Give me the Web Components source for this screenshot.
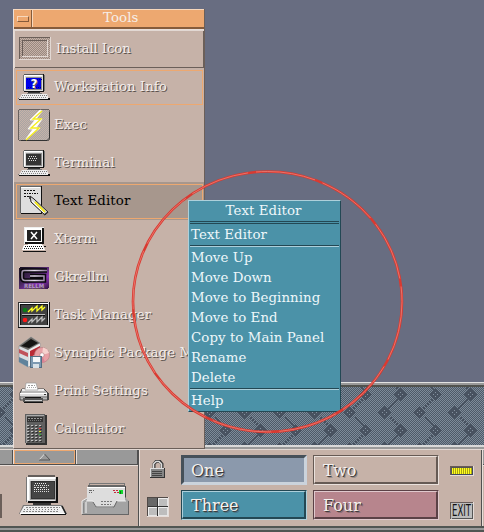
<!DOCTYPE html>
<html lang="en"><head><meta charset="utf-8"><title>Desktop</title>
<style>html,body{margin:0;height:532px;overflow:hidden;background:#686d81}</style></head>
<body><cde-desktop></cde-desktop>
<script>
const define=(name,html)=>customElements.define(name,class extends HTMLElement{
  connectedCallback(){
    if(this.shadowRoot)return;
    const root=this.attachShadow({mode:'open'});
    const t=document.createElement('template');
    t.innerHTML=typeof html==='function'?html(this):html;
    root.append(t.content.cloneNode(true));
  }
});
const r=(x,y,w,h,f)=>`<rect x="${x}" y="${y}" width="${w}" height="${h}" fill="${f}"/>`;
const dash=(x1,x2,y,c,d='1 1')=>`<path d="M${x1} ${y+.5}H${x2}" stroke="${c}" stroke-dasharray="${d}" fill="none"/>`;
const computer=(screen,extra)=>
  r(6,3,20,18,'#111')+r(5,4,22,16,'#777')+r(6,3,19,1,'#555')+r(6,4,19,16,'#dedede')+r(6,4,18,1,'#fff')+r(6,4,1,15,'#fff')+r(25,4,1,17,'#111')+r(8,6,16,13,'#8b8b8b')+r(8,7,15,11,screen)+extra+
  r(10,21,12,1,'#333')+r(9,22,15,1,'#777')+
  '<path d="M4 23H29L31 28H1Z" fill="#eee"/>'+dash(4,29,24,'#777')+dash(3,29,26,'#888')+r(1,28,31,1,'#111')+r(30,27,2,1,'#111')+r(0,27,1,1,'#777');
const mini=(x,y,c)=>`<path d="M${x} ${y+6}l4-4v3l5-5v5l5-5v4l3-3" stroke="${c}" stroke-width="1.3" fill="none"/>`;
const icons={
 install:[33,28,`<defs><pattern id="p" width="2" height="2" patternUnits="userSpaceOnUse"><rect width="2" height="2" fill="#c6b2a8"/><rect width="1" height="1" fill="#998980"/><rect x="1" y="1" width="1" height="1" fill="#998980"/></pattern></defs>`+
  r(1,4,32,23,'#e2d8d3')+r(1,4,31,22,'#6b5f59')+r(2,5,30,21,'url(#p)')+r(4,7,26,17,'#e2d8d3')+r(4,7,25,16,'#6b5f59')+r(5,8,24,15,'url(#p)')],
 info:[32,32,computer('#0000e8',dash(9,24,8,'#000080')+dash(10,24,16,'#000080')+'<text x="12.500" y="17" font-family="DejaVu Sans" font-weight="bold" font-size="12" fill="#fff">?</text>')],
 exec:[32,32,`<defs><pattern id="e" width="2" height="2" patternUnits="userSpaceOnUse"><rect width="2" height="2" fill="#c6b2a8"/><rect width="1" height="1" fill="#a9a5a4"/><rect x="1" y="1" width="1" height="1" fill="#a9a5a4"/></pattern></defs>
  <rect x=".5" y=".5" width="31" height="31" rx="2" fill="url(#e)" stroke="#69625f"/><path d="M3 31.5H29L31.5 29V3" stroke="#333" fill="none"/>
  <path d="M22 1 12 11H17L10 20H15L8 30 22 19H18L24 10H18L24 2Z" fill="#fff" stroke="#fff" stroke-width=".8"/><path d="M24 2 15 10H23L13 19H21L8 31" stroke="#f5ed20" fill="none" stroke-width="1.4"/>`],
 terminal:[32,32,computer('#343434',dash(11,19,9,'#ddd')+dash(10,20,11,'#ddd')+dash(11,18,13,'#ddd'))],
 editor:[32,32,r(2,1,22,27,'#666')+r(3,2,20,26,'#dedede')+r(3,2,19,1,'#fff')+r(23,1,1,28,'#111')+r(3,28,21,1,'#111')+dash(6,18,5,'#111','2 1')+dash(6,20,8,'#111','2 1 1 1')+dash(6,13,11,'#111','2 1')+
  '<path d="M12 11 16 14 30 27 27 30 13 17Z" fill="#d8d8d8" stroke="#222"/><path d="M17 17 27 27" stroke="#f4e91e" stroke-width="2"/><path d="M14 16 26 28" stroke="#fff"/><path d="M26 30 30 27M12 11V14" stroke="#333" stroke-width="1.5"/>'],
 xterm:[32,32,r(6,4,20,17,'#eee')+r(7,5,19,16,'#111')+r(7,5,17,14,'#fff')+r(9,7,14,11,'#222')+'<path d="M13 9 19 16M19 9 13 16" stroke="#fff" stroke-width="1.5"/>'+r(12,20,11,1,'#111')+'<path d="M6 22H25L27 27H4Z" fill="#fff"/>'+dash(7,25,23,'#111')+dash(6,25,25,'#222')+r(5,28,23,1,'#111')+r(26,23,2,1,'#111')+r(10,21,14,1,'#fff')],
 gkrellm:[32,32,`<defs><linearGradient id="g" x1="0" y1="0" x2="1" y2="1"><stop stop-color="#15101d"/><stop offset=".4" stop-color="#442658"/><stop offset=".7" stop-color="#8b35b4"/><stop offset="1" stop-color="#30123e"/></linearGradient><linearGradient id="h" x1="0" x2="1"><stop stop-color="#9a8ba6"/><stop offset=".5" stop-color="#e4dcec"/><stop offset="1" stop-color="#8c7599"/></linearGradient></defs>
  <rect x="1" y="6" width="30" height="22" rx="2" fill="url(#g)"/><path d="M29 9.500H6Q4 9.500 4 12V16Q4 19.500 7 19.500H26V15H12" fill="none" stroke="#09070b" stroke-width="4.500"/><path d="M29 9.500H6Q4 9.500 4 12V16Q4 19.500 7 19.500H26V15H12" fill="none" stroke="url(#h)" stroke-width="1.500"/><text x="6" y="27" font-family="DejaVu Sans" font-weight="bold" font-size="6" textLength="20" lengthAdjust="spacingAndGlyphs" fill="#b294c8">RELLM</text>`],
 task:[32,32,r(0,3,32,26,'#111')+r(0,3,31,25,'#ddd')+r(0,3,30,1,'#333')+r(0,3,1,25,'#333')+r(1,4,29,1,'#fff')+r(2,5,28,21,'#111')+r(3,6,26,20,'#414141')+r(4,15,23,1,'#bbb')+r(4,16,23,1,'#111')+'<circle cx="7" cy="11" r="2.300" fill="#087d16"/><circle cx="7" cy="21" r="2.300" fill="#ff1717"/>'+mini(10,7,'#ffff20')+mini(10,18,'#bbb')],
 synaptic:[32,32,`<path d="M1 9 13 0 22 6V26L10 30 1 25Z" fill="#d8dde0" stroke="#89929b" stroke-width=".6"/><path d="M1 9 13 0 22 6 10 13Z" fill="#6b6a66"/><path d="M3 9 13 2 20 6 11 11Z" fill="#151514"/><path d="M11 13 22 7V25L11 29Z" fill="#eee"/><path d="M12 14 22 9V16L12 20Z" fill="#b92935"/><path d="M1 12 10 16V20L1 16Z" fill="#c0525a"/><path d="M1 20 10 24V30L1 25Z" fill="#60829b"/>
  <circle cx="24" cy="18" r="7.500" fill="#e8a0a5" stroke="#b98287" stroke-width=".7"/><path d="M24 18 25 10.500A8 8 0 0 1 31 16Z" fill="#f6d2ce"/><path d="M24 18 18 23A8 8 0 0 0 27 25Z" fill="#d78494"/><circle cx="24" cy="18" r="2.200" fill="#fff" stroke="#ad7777" stroke-width=".6"/>
  <rect x="12.500" y="19.500" width="11" height="11" rx="1" fill="#7c99b1" stroke="#546d82"/><rect x="15" y="20" width="7" height="5" fill="#f5f8fa"/><rect x="15" y="27" width="6" height="4" fill="#d8e1e7"/>`],
 printer:[32,32,'<path d="M4 14H26L30 18V25H2V18Z" fill="#b8b8b8" stroke="#444"/>'+r(4,14,22,2,'#eee')+'<path d="M7 15 8 8H18L20 15Z" fill="#fff" stroke="#999" stroke-width=".7"/>'+dash(10,17,10,'#999','2 1')+dash(9,18,12,'#aaa','1 1')+r(2,18,28,3,'#ddd')+r(2,18,27,1,'#fff')+r(3,21,26,2,'#999')+r(5,23,20,4,'#555')+r(7,22,16,1,'#111')+r(7,25,17,1,'#ccc')+r(6,27,19,1,'#111')+r(26,19,2,1,'#333')+r(29,18,2,7,'#444')],
 calculator:[32,32,r(8,2,21,30,'#333')+r(7,1,20,29,'#606060')+r(8,2,1,28,'#999')+r(9,2,17,1,'#aaa')+r(9,4,16,5,'#333')+dash(10,24,5,'#999','2 1')+dash(10,24,7,'#777','1 1')+[12,15,18,21,24,27].map(y=>[9,13,17,21].map(x=>r(x+1,y+1,2,1,'#333')+r(x,y,2,1,x===21&&y===15?'#ee3434':x===21&&y===18?'#eeee20':x===21&&y===21?'#30c040':'#c2c2c2')).join('')).join('')],
 bigterm:[48,42,r(9,0,27,2,'#655e5b')+r(7,2,32,25,'#777')+r(8,2,29,25,'#e0e0e0')+r(8,2,28,2,'#fff')+r(8,3,2,22,'#fff')+r(37,2,2,26,'#111')+r(36,4,1,22,'#aaa')+r(11,6,25,19,'#999')+r(12,6,24,18,'#333')+r(13,7,22,16,'#444')+dash(16,28,8,'#eee')+dash(15,30,10,'#ddd')+dash(15,28,12,'#ddd','2 1')+dash(15,30,14,'#eee')+dash(15,31,16,'#ddd')+r(9,26,28,2,'#111')+r(14,28,18,2,'#333')+r(17,30,13,1,'#666')+
  '<path d="M4 30H43L48 39H0Z" fill="#777"/><path d="M5 31H42L46 38H1Z" fill="#eee"/>'+dash(7,41,32,'#888','2 1')+dash(5,41,34,'#777','1 2')+dash(4,40,36,'#888','2 1')+r(1,38,46,1,'#fff')+r(2,39,45,1,'#111')+'<path d="M43 31 47 39" stroke="#222" stroke-width="1.500"/>'],
 mail:[49,34,r(7,0,36,4,'#777')+r(8,1,34,2,'#c6b2a8')+r(6,2,37,3,'#666')+r(5,4,38,25,'#ddd')+r(5,4,38,1,'#fff')+r(43,3,1,14,'#444')+'<path d="M0 18 5 15V18H11L15 24H30L34 18H43V14L47 18V31H0Z" fill="#a3a3a3"/><path d="M0 31V18L5 15M4 18H11L14 24H31L34 18H44" stroke="#eee" fill="none"/><path d="M11 19 14 24H32L35 18" stroke="#666" fill="none"/>'+r(0,31,47,1,'#666')+r(46,18,1,14,'#666')+r(3,19,2,11,'#ccc')+r(1,20,1,10,'#888')+dash(7,12,7,'#666','3 1')+dash(7,10,9,'#666')+dash(19,30,18,'#777','2 1')+dash(19,29,21,'#777','2 1')+dash(31,37,7,'#c62c3b','2 1')+dash(32,37,9,'#c62c3b','2 1')+r(37,7,4,4,'#11d92b')+r(38,8,1,3,'#087d16')],
 lock:[16,19,'<path d="M4 8V4L6 1.500H10L12 4V8" stroke="#333" stroke-width="3" fill="none"/><path d="M3.500 8V4L6 1.500H9L11.500 4V8" stroke="#ddd" stroke-width="1.500" fill="none"/>'+r(0,8,15,10,'#333')+r(0,8,14,9,'#ddd')+r(1,9,13,8,'#858585')+r(2,11,10,1,'#444')+r(2,13,10,1,'#444')+r(2,15,10,1,'#444')],
 grid:[22,20,r(0,0,22,20,'#e6ddd9')+r(0,0,21,19,'#514a47')+r(1,1,20,18,'#e4e4e4')+[[1,1],[11,1],[1,10],[11,10]].map(([x,y],i)=>r(x,y,9,8,'#444')+r(x+(i?1:0),y+(i?1:0),i?8:9,i?7:8,i?'#bdbdbd':'#686868')+(i?r(x,y,9,1,'#eee')+r(x,y,1,8,'#eee'):'')).join('')+r(10,1,1,18,'#333')+r(1,9,20,1,'#333')],
 load:[24,10,r(0,0,24,10,'#e6ddd9')+r(0,0,23,9,'#675b58')+r(1,1,22,8,'#555')+r(2,2,20,6,'#aaa413')+Array.from({length:10},(_,i)=>r(2+i*2,2,1,6,'#ffff20')).join('')+r(22,2,1,7,'#404860')+r(2,8,21,1,'#404860')],
 exit:[24,18,r(0,0,24,18,'#e6ddd9')+r(0,0,23,1,'#675b58')+r(0,0,1,17,'#675b58')+r(1,1,22,16,'#bdbdbd')+r(22,2,1,15,'#555')+r(2,16,21,1,'#555')+'<text x="2" y="14" font-family="DejaVu Sans" font-size="15" textLength="19" lengthAdjust="spacingAndGlyphs" fill="#111">EXIT</text>']
};
define('cde-icon',el=>{const [w,h,s]=icons[el.getAttribute('name')];return `<style>:host{display:block;width:${w}px;height:${h}px;flex:none}svg{display:block;overflow:visible;shape-rendering:crispEdges}path,circle,text{shape-rendering:auto}</style><svg width="${w}" height="${h}" viewBox="0 0 ${w} ${h}">${s}</svg>`});

define('cde-item',`<style>
:host{display:flex;box-sizing:border-box;width:190px;height:38px;padding:3px 0 3px 4px;align-items:flex-start;gap:4px;white-space:nowrap;color:#f2edeb;text-shadow:1px 1px 0 #5b514c;position:relative;letter-spacing:.12px}
span{line-height:32px}
:host([framed])::before{content:"";position:absolute;inset:2px 1px 1px 2px;border:1px solid #eda870}
:host([tight]){letter-spacing:0}
:host([active]){background:#a7978d;color:#000;text-shadow:none}
:host([first]){box-shadow:inset 1px 1px #e2d8d3,inset -1px -1px #6b5f59;gap:5px;letter-spacing:-.12px}
</style><slot name="icon"></slot><span><slot></slot></span>`);

define('cde-title',`<style>
:host{display:flex;height:20px;background:#eda870;box-sizing:border-box;border-top:1px solid #f8d8bc;border-bottom:2px solid #855b3b;color:#f6eee8}
i{width:19px;border-right:1px solid #855b3b;box-sizing:border-box;display:grid;place-items:center;padding:1px 0 0 2px}
i:before{content:"";width:10px;height:4px;border:1px solid;border-color:#f8d8bc #855b3b #855b3b #f8d8bc}
b{font-weight:400;flex:1;border-left:1px solid #f8d8bc;text-align:center;line-height:16px;padding-left:6px;border-right:1px solid #855b3b;padding-right:0;text-indent:0;box-sizing:border-box;padding-right:1px;letter-spacing:.1px}
b{padding-left:0;text-align:left;padding-left:70px}
</style><i></i><b><slot></slot></b>`);

define('cde-subpanel',`<style>
:host{display:block;box-sizing:border-box;width:192px;height:440px;background:#c6b2a8;border-left:1px solid #e8ded9;border-right:1px solid #6b5f59;border-bottom:1px solid #6b5f59;overflow:hidden;font:13.33px/16px "DejaVu Serif",serif}
cde-title{margin-left:-1px;margin-right:-1px}
.list{border-top:1px solid #e8ded9}
</style><cde-title>Tools</cde-title><div class="list">
${[['install','Install Icon','first'],['info','Workstation Info','framed tight'],['exec','Exec',''],['terminal','Terminal',''],['editor','Text Editor','active framed'],['xterm','Xterm',''],['gkrellm','Gkrellm','tight'],['task','Task Manager',''],['synaptic','Synaptic Package M',''],['printer','Print Settings','tight'],['calculator','Calculator','tight']].map(a=>`<cde-item ${a[2]}><cde-icon slot="icon" name="${a[0]}"></cde-icon>${a[1]}</cde-item>`).join('')}</div>`);

define('cde-menu',`<style>
:host{display:block;box-sizing:border-box;width:153px;height:212px;background:#4b92a8;border:1px solid;border-color:#add0db #234854 #234854 #add0db;font:13.33px/20px "DejaVu Serif",serif;letter-spacing:.08px;color:#eef7fa}
h1{font:inherit;text-align:center;margin:0;height:20px;padding-right:2px}
div{padding-left:2px;height:20px}
hr{border:0;margin:0 1px 1px;height:1px;background:#234854;border-bottom:1px solid #add0db}
hr.double{height:1px;background:none;border-top:1px solid #234854;border-bottom:1px solid #234854}
</style><h1>Text Editor</h1><hr class="double"><div>Text Editor</div><hr><div>Move Up</div><div>Move Down</div><div>Move to Beginning</div><div>Move to End</div><div>Copy to Main Panel</div><div>Rename</div><div>Delete</div><hr><div>Help</div>`);

define('workspace-button',`<style>
:host{display:block;box-sizing:border-box;width:126px;height:30px;background:var(--c);border:1px solid;border-color:var(--d) var(--l) var(--l) var(--d);font:16px/27px "DejaVu Serif",serif;color:#f4f1ef;text-shadow:1px 1px #3d3a3a,2px 2px #3d3a3a55}
div{box-sizing:border-box;height:28px;padding-left:8px;border:1px solid;border-color:var(--l) var(--d) var(--d) var(--l);border-right-width:2px;border-bottom-width:2px}
:host([pressed]) div{border:2px solid;border-color:var(--d) var(--l) var(--l) var(--d);padding-left:7px;line-height:25px}
</style><div><slot></slot></div>`);

define('front-panel',`<style>
:host{display:grid;grid-template-columns:138px 343px 3px;box-sizing:border-box;width:484px;height:87px;padding-top:5px;background:linear-gradient(#d9d9d9 2px,#999 2px 4px,#e2d8d3 4px 5px,#c6b2a8 5px);position:relative}
section{height:76px}
.tabs{display:grid;grid-template-columns:13px 63px 62px;height:15px;background:#999;border-bottom:1px solid #505050;box-sizing:border-box;box-shadow:0 1px #e8ded9}
.tabs>*{box-sizing:border-box;border-right:1px solid #505050}
.tabs .last{border-left:1px solid #e8ded9}
.tab{border-left:1px solid #e8ded9}
.arrow{border:1px solid #eda870;display:grid;place-items:center;height:14px;box-sizing:border-box}
.apps{display:flex;gap:15px;align-items:flex-start;margin-top:10px}
.apps:before{content:"";width:2px;height:24px;margin:19px 2px 0 0;background:#6b5f59}
.mail{margin-top:8px}
.switch{border-left:1px solid #505050;display:grid;grid-template-columns:27px 126px 126px 24px;grid-template-rows:30px 30px;gap:5px 7px;padding:5px 0 0 7px;box-sizing:border-box;align-content:start;align-items:start;box-shadow:inset 1px 0 #e8ded9}
[name=lock]{margin:5px 0 0 4px}[name=grid]{margin:7px 0 0 1px}
workspace-button{margin-left:1px}.second{margin-left:0}
.switch{column-gap:7px}
[name=load]{margin:11px 0 0 4px}[name=exit]{margin:12px 0 0 4px}
.edge{border-left:1px solid #505050;background:linear-gradient(#999 14px,#505050 14px 15px,#e8ded9 15px 16px,#c6b2a8 16px);box-shadow:inset 1px 0 #e8ded9}
footer{grid-column:1/-1;height:6px;background:linear-gradient(#505552 2px,#999 2px 4px,#505552 4px)}
</style>
<section><div class="tabs"><i></i><div class="tab"><div class="arrow"><svg width="13" height="8"><path d="M1 7 6.500 1" stroke="#ddd" /><path d="M6.500 1 12 7H1" fill="none" stroke="#555"/></svg></div></div><i class="last"></i></div>
<div class="apps"><cde-icon name="bigterm"></cde-icon><cde-icon class="mail" name="mail"></cde-icon></div></section>
<section class="switch"><cde-icon name="lock"></cde-icon>
<workspace-button pressed style="--c:#8b99ac;--d:#465059;--l:#cbd3dc">One</workspace-button>
<workspace-button class="second" style="--c:#c6b2a8;--d:#665a54;--l:#eae1dc">Two</workspace-button><cde-icon name="load"></cde-icon>
<cde-icon name="grid"></cde-icon>
<workspace-button style="--c:#4b92a8;--d:#234854;--l:#add0db">Three</workspace-button>
<workspace-button class="second" style="--c:#b7858d;--d:#5b4146;--l:#e0c9cd">Four</workspace-button><cde-icon name="exit"></cde-icon></section><div class="edge"></div><footer></footer>`);

define('pattern-strip',()=>{
 const diamond=(cx,cy)=>{let s='';for(let y=-6;y<=6;y++){const w=6-Math.abs(y);s+=r(cx-w,cy+y,2*w+1,1,'#485260')}
  return s+[[-2,0],[2,0],[0,-2],[0,2]].map(p=>r(cx+p[0],cy+p[1],1,1,'#8592a0')).join('')};
 let line='';for(let i=5;i<15;i+=2){line+=r(29-i,7+i,2,2,'#485260')+r(13+i,25+i,2,2,'#485260')+r(13+i,25+i-36,2,2,'#485260')}
 return `<style>:host{display:block;height:63px;box-sizing:border-box;padding-top:5px;background:linear-gradient(#e2e2e2 1px,#999 1px 3px,#50524e 3px 5px,#667382 5px)}svg{display:block}</style>
<svg width="484" height="58" shape-rendering="crispEdges"><defs><pattern id="c" width="2" height="2" patternUnits="userSpaceOnUse">${r(0,0,2,2,'#7d8b99')+r(0,0,1,1,'#4e5a68')+r(1,1,1,1,'#4e5a68')}</pattern><pattern id="z" x="370" y="0" width="35" height="36" patternUnits="userSpaceOnUse">${line+diamond(28,7)+diamond(12,25)}</pattern></defs>${r(0,0,484,58,'url(#c)')}<g transform="translate(2 0)">${r(-2,0,484,58,'url(#z)')}</g></svg>`});

define('cde-desktop',`<style>
:host{display:flex;flex-direction:column;justify-content:flex-end;position:relative;width:484px;height:532px;overflow:hidden;background:#686d81}
cde-subpanel{position:absolute;left:13px;top:9px}
cde-menu{position:absolute;left:188px;top:200px}
.ring{position:absolute;left:0;top:0}
</style><pattern-strip></pattern-strip><front-panel></front-panel><cde-subpanel></cde-subpanel><cde-menu></cde-menu>
<svg class="ring" width="484" height="532" fill="none"><ellipse cx="267.500" cy="301.700" rx="134.500" ry="130.200" stroke="#d93a31" stroke-width="2.600"/><ellipse cx="267.500" cy="301.700" rx="134.500" ry="130.200" stroke="#ec8277" stroke-width=".8" stroke-dasharray="60 8"/></svg>`);
</script></body></html>
